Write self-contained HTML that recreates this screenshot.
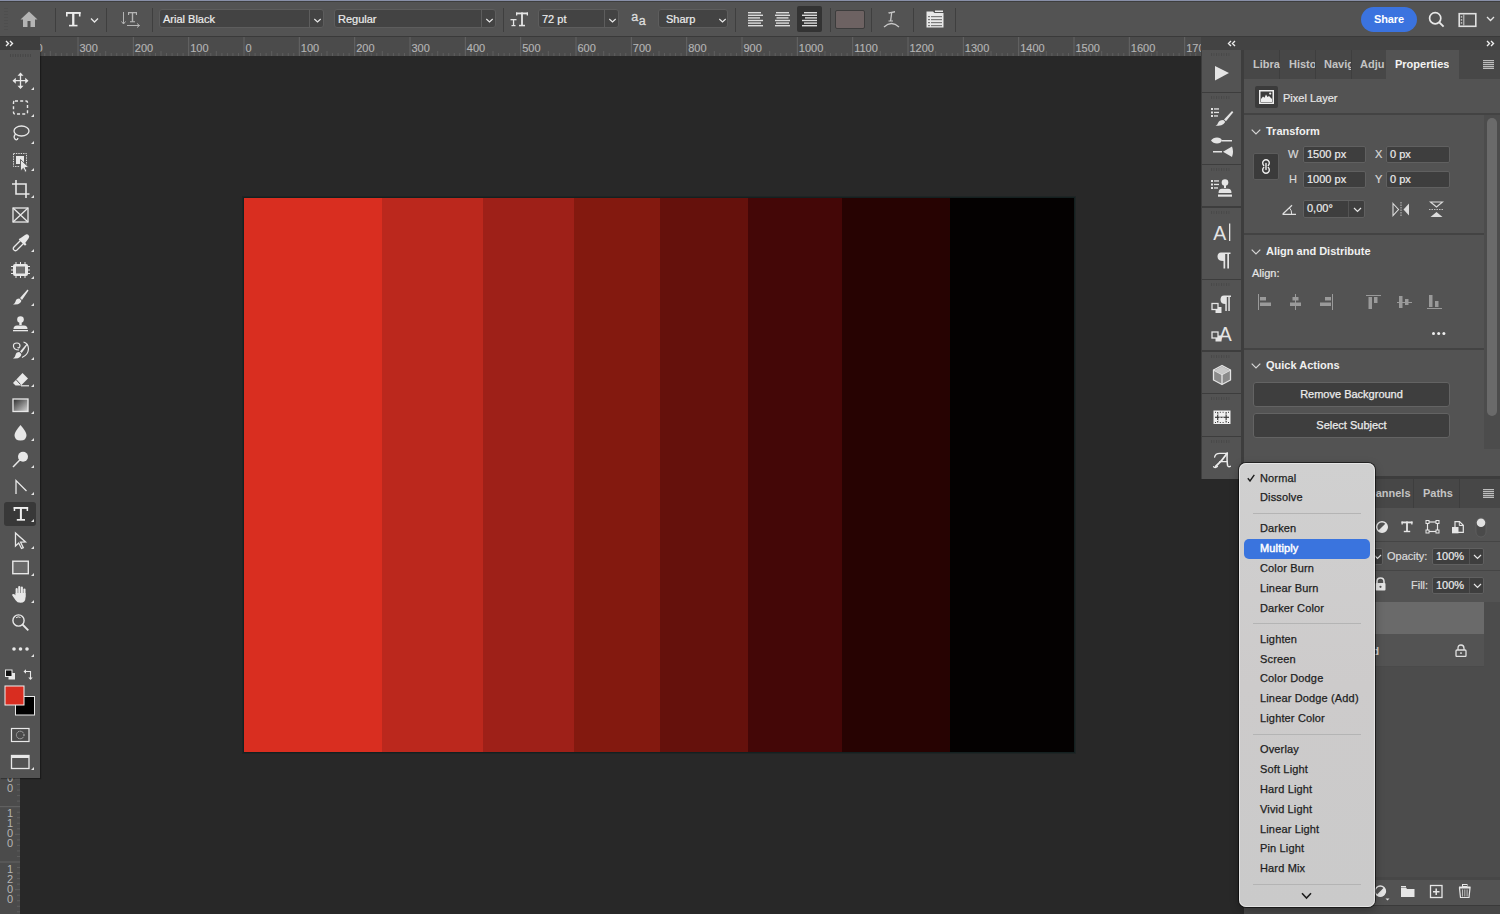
<!DOCTYPE html>
<html><head><meta charset="utf-8">
<style>
*{box-sizing:border-box;margin:0;padding:0}
html,body{width:1500px;height:914px;overflow:hidden;background:#282828;font-family:"Liberation Sans",sans-serif;color:#ddd;position:relative}
.abs{position:absolute}
.rl{position:absolute;top:6px;font-size:11px;line-height:11px;color:#b4b4b4;-webkit-text-stroke:0.15px #b4b4b4;white-space:nowrap}
.vl{position:absolute;left:6px;font-size:11px;line-height:10px;color:#b4b4b4;text-align:center;width:8px}
svg{display:block}
.sep{top:8px;width:1px;height:24px;background:#3f3f3f}
.box{background:#434343;border:1px solid #5d5d5d;border-radius:3px;overflow:hidden}
.bt{position:absolute;left:3px;top:1px;font-size:11px;line-height:17px;-webkit-text-stroke:0.2px #ececec;color:#ececec;white-space:nowrap}
.split{top:0;width:1px;height:17px;background:#5d5d5d}
.grp{left:1202px;width:39px;background:#535353}
.tsep{top:0;width:1px;height:29px;background:#3e3e3e}
.tab{top:8px;font-size:11px;line-height:13px;font-weight:bold;color:#c4c4c4;white-space:nowrap;overflow:hidden}
.lbl{font-size:11px;line-height:13px;color:#e6e6e6;-webkit-text-stroke:0.2px #e6e6e6;white-space:nowrap}
.lbl2{font-size:11px;line-height:13px;color:#d8d8d8;-webkit-text-stroke:0.2px #d8d8d8;white-space:nowrap}
.hd{left:22px;font-size:11px;line-height:13px;font-weight:bold;color:#f0f0f0;white-space:nowrap}
.chev{left:7px}
.inp{background:#3e3e3e;border:1px solid #606060;border-radius:2px;font-size:11px;line-height:15px;padding-left:3px;color:#ececec;-webkit-text-stroke:0.2px #ececec;white-space:nowrap}
.btn{background:#3e3e3e;border:1px solid #636363;border-radius:3px;font-size:11px;line-height:23px;text-align:center;color:#ececec;-webkit-text-stroke:0.25px #ececec;white-space:nowrap}
.inp2{background:#3e3e3e;border:1px solid #606060;border-radius:2px;font-size:11px;line-height:15px;color:#ececec;-webkit-text-stroke:0.2px #ececec;white-space:nowrap}
.inp2 span{position:absolute;left:3px;top:0}
.mi{left:21px;font-size:11px;line-height:13px;white-space:nowrap;letter-spacing:0.15px;-webkit-text-stroke:0.25px currentColor}

</style></head><body>
<div class="abs" id="hruler" style="left:0;top:37px;width:1201px;height:19px;background:#4b4b4b;overflow:hidden">
<svg width="1201" height="19" style="position:absolute;left:0;top:0"><rect x="-33.17" y="0" width="1" height="19" fill="#656565"/><rect x="-27.63" y="16" width="1" height="3" fill="#5e5e5e"/><rect x="-22.10" y="16" width="1" height="3" fill="#5e5e5e"/><rect x="-16.57" y="16" width="1" height="3" fill="#5e5e5e"/><rect x="-11.03" y="16" width="1" height="3" fill="#5e5e5e"/><rect x="-5.50" y="14" width="1" height="5" fill="#5e5e5e"/><rect x="0.03" y="16" width="1" height="3" fill="#5e5e5e"/><rect x="5.57" y="16" width="1" height="3" fill="#5e5e5e"/><rect x="11.10" y="16" width="1" height="3" fill="#5e5e5e"/><rect x="16.63" y="16" width="1" height="3" fill="#5e5e5e"/><rect x="22.17" y="0" width="1" height="19" fill="#656565"/><rect x="27.70" y="16" width="1" height="3" fill="#5e5e5e"/><rect x="33.23" y="16" width="1" height="3" fill="#5e5e5e"/><rect x="38.77" y="16" width="1" height="3" fill="#5e5e5e"/><rect x="44.30" y="16" width="1" height="3" fill="#5e5e5e"/><rect x="49.83" y="14" width="1" height="5" fill="#5e5e5e"/><rect x="55.37" y="16" width="1" height="3" fill="#5e5e5e"/><rect x="60.90" y="16" width="1" height="3" fill="#5e5e5e"/><rect x="66.43" y="16" width="1" height="3" fill="#5e5e5e"/><rect x="71.97" y="16" width="1" height="3" fill="#5e5e5e"/><rect x="77.50" y="0" width="1" height="19" fill="#656565"/><rect x="83.03" y="16" width="1" height="3" fill="#5e5e5e"/><rect x="88.57" y="16" width="1" height="3" fill="#5e5e5e"/><rect x="94.10" y="16" width="1" height="3" fill="#5e5e5e"/><rect x="99.63" y="16" width="1" height="3" fill="#5e5e5e"/><rect x="105.17" y="14" width="1" height="5" fill="#5e5e5e"/><rect x="110.70" y="16" width="1" height="3" fill="#5e5e5e"/><rect x="116.23" y="16" width="1" height="3" fill="#5e5e5e"/><rect x="121.77" y="16" width="1" height="3" fill="#5e5e5e"/><rect x="127.30" y="16" width="1" height="3" fill="#5e5e5e"/><rect x="132.83" y="0" width="1" height="19" fill="#656565"/><rect x="138.37" y="16" width="1" height="3" fill="#5e5e5e"/><rect x="143.90" y="16" width="1" height="3" fill="#5e5e5e"/><rect x="149.43" y="16" width="1" height="3" fill="#5e5e5e"/><rect x="154.97" y="16" width="1" height="3" fill="#5e5e5e"/><rect x="160.50" y="14" width="1" height="5" fill="#5e5e5e"/><rect x="166.03" y="16" width="1" height="3" fill="#5e5e5e"/><rect x="171.57" y="16" width="1" height="3" fill="#5e5e5e"/><rect x="177.10" y="16" width="1" height="3" fill="#5e5e5e"/><rect x="182.63" y="16" width="1" height="3" fill="#5e5e5e"/><rect x="188.17" y="0" width="1" height="19" fill="#656565"/><rect x="193.70" y="16" width="1" height="3" fill="#5e5e5e"/><rect x="199.23" y="16" width="1" height="3" fill="#5e5e5e"/><rect x="204.77" y="16" width="1" height="3" fill="#5e5e5e"/><rect x="210.30" y="16" width="1" height="3" fill="#5e5e5e"/><rect x="215.83" y="14" width="1" height="5" fill="#5e5e5e"/><rect x="221.37" y="16" width="1" height="3" fill="#5e5e5e"/><rect x="226.90" y="16" width="1" height="3" fill="#5e5e5e"/><rect x="232.43" y="16" width="1" height="3" fill="#5e5e5e"/><rect x="237.97" y="16" width="1" height="3" fill="#5e5e5e"/><rect x="243.50" y="0" width="1" height="19" fill="#656565"/><rect x="249.03" y="16" width="1" height="3" fill="#5e5e5e"/><rect x="254.57" y="16" width="1" height="3" fill="#5e5e5e"/><rect x="260.10" y="16" width="1" height="3" fill="#5e5e5e"/><rect x="265.63" y="16" width="1" height="3" fill="#5e5e5e"/><rect x="271.17" y="14" width="1" height="5" fill="#5e5e5e"/><rect x="276.70" y="16" width="1" height="3" fill="#5e5e5e"/><rect x="282.23" y="16" width="1" height="3" fill="#5e5e5e"/><rect x="287.77" y="16" width="1" height="3" fill="#5e5e5e"/><rect x="293.30" y="16" width="1" height="3" fill="#5e5e5e"/><rect x="298.83" y="0" width="1" height="19" fill="#656565"/><rect x="304.37" y="16" width="1" height="3" fill="#5e5e5e"/><rect x="309.90" y="16" width="1" height="3" fill="#5e5e5e"/><rect x="315.43" y="16" width="1" height="3" fill="#5e5e5e"/><rect x="320.97" y="16" width="1" height="3" fill="#5e5e5e"/><rect x="326.50" y="14" width="1" height="5" fill="#5e5e5e"/><rect x="332.03" y="16" width="1" height="3" fill="#5e5e5e"/><rect x="337.57" y="16" width="1" height="3" fill="#5e5e5e"/><rect x="343.10" y="16" width="1" height="3" fill="#5e5e5e"/><rect x="348.63" y="16" width="1" height="3" fill="#5e5e5e"/><rect x="354.17" y="0" width="1" height="19" fill="#656565"/><rect x="359.70" y="16" width="1" height="3" fill="#5e5e5e"/><rect x="365.23" y="16" width="1" height="3" fill="#5e5e5e"/><rect x="370.77" y="16" width="1" height="3" fill="#5e5e5e"/><rect x="376.30" y="16" width="1" height="3" fill="#5e5e5e"/><rect x="381.83" y="14" width="1" height="5" fill="#5e5e5e"/><rect x="387.37" y="16" width="1" height="3" fill="#5e5e5e"/><rect x="392.90" y="16" width="1" height="3" fill="#5e5e5e"/><rect x="398.43" y="16" width="1" height="3" fill="#5e5e5e"/><rect x="403.97" y="16" width="1" height="3" fill="#5e5e5e"/><rect x="409.50" y="0" width="1" height="19" fill="#656565"/><rect x="415.03" y="16" width="1" height="3" fill="#5e5e5e"/><rect x="420.57" y="16" width="1" height="3" fill="#5e5e5e"/><rect x="426.10" y="16" width="1" height="3" fill="#5e5e5e"/><rect x="431.63" y="16" width="1" height="3" fill="#5e5e5e"/><rect x="437.17" y="14" width="1" height="5" fill="#5e5e5e"/><rect x="442.70" y="16" width="1" height="3" fill="#5e5e5e"/><rect x="448.23" y="16" width="1" height="3" fill="#5e5e5e"/><rect x="453.77" y="16" width="1" height="3" fill="#5e5e5e"/><rect x="459.30" y="16" width="1" height="3" fill="#5e5e5e"/><rect x="464.83" y="0" width="1" height="19" fill="#656565"/><rect x="470.37" y="16" width="1" height="3" fill="#5e5e5e"/><rect x="475.90" y="16" width="1" height="3" fill="#5e5e5e"/><rect x="481.43" y="16" width="1" height="3" fill="#5e5e5e"/><rect x="486.97" y="16" width="1" height="3" fill="#5e5e5e"/><rect x="492.50" y="14" width="1" height="5" fill="#5e5e5e"/><rect x="498.03" y="16" width="1" height="3" fill="#5e5e5e"/><rect x="503.57" y="16" width="1" height="3" fill="#5e5e5e"/><rect x="509.10" y="16" width="1" height="3" fill="#5e5e5e"/><rect x="514.63" y="16" width="1" height="3" fill="#5e5e5e"/><rect x="520.17" y="0" width="1" height="19" fill="#656565"/><rect x="525.70" y="16" width="1" height="3" fill="#5e5e5e"/><rect x="531.23" y="16" width="1" height="3" fill="#5e5e5e"/><rect x="536.77" y="16" width="1" height="3" fill="#5e5e5e"/><rect x="542.30" y="16" width="1" height="3" fill="#5e5e5e"/><rect x="547.83" y="14" width="1" height="5" fill="#5e5e5e"/><rect x="553.37" y="16" width="1" height="3" fill="#5e5e5e"/><rect x="558.90" y="16" width="1" height="3" fill="#5e5e5e"/><rect x="564.43" y="16" width="1" height="3" fill="#5e5e5e"/><rect x="569.97" y="16" width="1" height="3" fill="#5e5e5e"/><rect x="575.50" y="0" width="1" height="19" fill="#656565"/><rect x="581.03" y="16" width="1" height="3" fill="#5e5e5e"/><rect x="586.57" y="16" width="1" height="3" fill="#5e5e5e"/><rect x="592.10" y="16" width="1" height="3" fill="#5e5e5e"/><rect x="597.63" y="16" width="1" height="3" fill="#5e5e5e"/><rect x="603.17" y="14" width="1" height="5" fill="#5e5e5e"/><rect x="608.70" y="16" width="1" height="3" fill="#5e5e5e"/><rect x="614.23" y="16" width="1" height="3" fill="#5e5e5e"/><rect x="619.77" y="16" width="1" height="3" fill="#5e5e5e"/><rect x="625.30" y="16" width="1" height="3" fill="#5e5e5e"/><rect x="630.83" y="0" width="1" height="19" fill="#656565"/><rect x="636.37" y="16" width="1" height="3" fill="#5e5e5e"/><rect x="641.90" y="16" width="1" height="3" fill="#5e5e5e"/><rect x="647.43" y="16" width="1" height="3" fill="#5e5e5e"/><rect x="652.97" y="16" width="1" height="3" fill="#5e5e5e"/><rect x="658.50" y="14" width="1" height="5" fill="#5e5e5e"/><rect x="664.03" y="16" width="1" height="3" fill="#5e5e5e"/><rect x="669.57" y="16" width="1" height="3" fill="#5e5e5e"/><rect x="675.10" y="16" width="1" height="3" fill="#5e5e5e"/><rect x="680.63" y="16" width="1" height="3" fill="#5e5e5e"/><rect x="686.17" y="0" width="1" height="19" fill="#656565"/><rect x="691.70" y="16" width="1" height="3" fill="#5e5e5e"/><rect x="697.23" y="16" width="1" height="3" fill="#5e5e5e"/><rect x="702.77" y="16" width="1" height="3" fill="#5e5e5e"/><rect x="708.30" y="16" width="1" height="3" fill="#5e5e5e"/><rect x="713.83" y="14" width="1" height="5" fill="#5e5e5e"/><rect x="719.37" y="16" width="1" height="3" fill="#5e5e5e"/><rect x="724.90" y="16" width="1" height="3" fill="#5e5e5e"/><rect x="730.43" y="16" width="1" height="3" fill="#5e5e5e"/><rect x="735.97" y="16" width="1" height="3" fill="#5e5e5e"/><rect x="741.50" y="0" width="1" height="19" fill="#656565"/><rect x="747.03" y="16" width="1" height="3" fill="#5e5e5e"/><rect x="752.57" y="16" width="1" height="3" fill="#5e5e5e"/><rect x="758.10" y="16" width="1" height="3" fill="#5e5e5e"/><rect x="763.63" y="16" width="1" height="3" fill="#5e5e5e"/><rect x="769.17" y="14" width="1" height="5" fill="#5e5e5e"/><rect x="774.70" y="16" width="1" height="3" fill="#5e5e5e"/><rect x="780.23" y="16" width="1" height="3" fill="#5e5e5e"/><rect x="785.77" y="16" width="1" height="3" fill="#5e5e5e"/><rect x="791.30" y="16" width="1" height="3" fill="#5e5e5e"/><rect x="796.83" y="0" width="1" height="19" fill="#656565"/><rect x="802.37" y="16" width="1" height="3" fill="#5e5e5e"/><rect x="807.90" y="16" width="1" height="3" fill="#5e5e5e"/><rect x="813.43" y="16" width="1" height="3" fill="#5e5e5e"/><rect x="818.97" y="16" width="1" height="3" fill="#5e5e5e"/><rect x="824.50" y="14" width="1" height="5" fill="#5e5e5e"/><rect x="830.03" y="16" width="1" height="3" fill="#5e5e5e"/><rect x="835.57" y="16" width="1" height="3" fill="#5e5e5e"/><rect x="841.10" y="16" width="1" height="3" fill="#5e5e5e"/><rect x="846.63" y="16" width="1" height="3" fill="#5e5e5e"/><rect x="852.17" y="0" width="1" height="19" fill="#656565"/><rect x="857.70" y="16" width="1" height="3" fill="#5e5e5e"/><rect x="863.23" y="16" width="1" height="3" fill="#5e5e5e"/><rect x="868.77" y="16" width="1" height="3" fill="#5e5e5e"/><rect x="874.30" y="16" width="1" height="3" fill="#5e5e5e"/><rect x="879.83" y="14" width="1" height="5" fill="#5e5e5e"/><rect x="885.37" y="16" width="1" height="3" fill="#5e5e5e"/><rect x="890.90" y="16" width="1" height="3" fill="#5e5e5e"/><rect x="896.43" y="16" width="1" height="3" fill="#5e5e5e"/><rect x="901.97" y="16" width="1" height="3" fill="#5e5e5e"/><rect x="907.50" y="0" width="1" height="19" fill="#656565"/><rect x="913.03" y="16" width="1" height="3" fill="#5e5e5e"/><rect x="918.57" y="16" width="1" height="3" fill="#5e5e5e"/><rect x="924.10" y="16" width="1" height="3" fill="#5e5e5e"/><rect x="929.63" y="16" width="1" height="3" fill="#5e5e5e"/><rect x="935.17" y="14" width="1" height="5" fill="#5e5e5e"/><rect x="940.70" y="16" width="1" height="3" fill="#5e5e5e"/><rect x="946.23" y="16" width="1" height="3" fill="#5e5e5e"/><rect x="951.77" y="16" width="1" height="3" fill="#5e5e5e"/><rect x="957.30" y="16" width="1" height="3" fill="#5e5e5e"/><rect x="962.83" y="0" width="1" height="19" fill="#656565"/><rect x="968.37" y="16" width="1" height="3" fill="#5e5e5e"/><rect x="973.90" y="16" width="1" height="3" fill="#5e5e5e"/><rect x="979.43" y="16" width="1" height="3" fill="#5e5e5e"/><rect x="984.97" y="16" width="1" height="3" fill="#5e5e5e"/><rect x="990.50" y="14" width="1" height="5" fill="#5e5e5e"/><rect x="996.03" y="16" width="1" height="3" fill="#5e5e5e"/><rect x="1001.57" y="16" width="1" height="3" fill="#5e5e5e"/><rect x="1007.10" y="16" width="1" height="3" fill="#5e5e5e"/><rect x="1012.63" y="16" width="1" height="3" fill="#5e5e5e"/><rect x="1018.17" y="0" width="1" height="19" fill="#656565"/><rect x="1023.70" y="16" width="1" height="3" fill="#5e5e5e"/><rect x="1029.23" y="16" width="1" height="3" fill="#5e5e5e"/><rect x="1034.77" y="16" width="1" height="3" fill="#5e5e5e"/><rect x="1040.30" y="16" width="1" height="3" fill="#5e5e5e"/><rect x="1045.83" y="14" width="1" height="5" fill="#5e5e5e"/><rect x="1051.37" y="16" width="1" height="3" fill="#5e5e5e"/><rect x="1056.90" y="16" width="1" height="3" fill="#5e5e5e"/><rect x="1062.43" y="16" width="1" height="3" fill="#5e5e5e"/><rect x="1067.97" y="16" width="1" height="3" fill="#5e5e5e"/><rect x="1073.50" y="0" width="1" height="19" fill="#656565"/><rect x="1079.03" y="16" width="1" height="3" fill="#5e5e5e"/><rect x="1084.57" y="16" width="1" height="3" fill="#5e5e5e"/><rect x="1090.10" y="16" width="1" height="3" fill="#5e5e5e"/><rect x="1095.63" y="16" width="1" height="3" fill="#5e5e5e"/><rect x="1101.17" y="14" width="1" height="5" fill="#5e5e5e"/><rect x="1106.70" y="16" width="1" height="3" fill="#5e5e5e"/><rect x="1112.23" y="16" width="1" height="3" fill="#5e5e5e"/><rect x="1117.77" y="16" width="1" height="3" fill="#5e5e5e"/><rect x="1123.30" y="16" width="1" height="3" fill="#5e5e5e"/><rect x="1128.83" y="0" width="1" height="19" fill="#656565"/><rect x="1134.37" y="16" width="1" height="3" fill="#5e5e5e"/><rect x="1139.90" y="16" width="1" height="3" fill="#5e5e5e"/><rect x="1145.43" y="16" width="1" height="3" fill="#5e5e5e"/><rect x="1150.97" y="16" width="1" height="3" fill="#5e5e5e"/><rect x="1156.50" y="14" width="1" height="5" fill="#5e5e5e"/><rect x="1162.03" y="16" width="1" height="3" fill="#5e5e5e"/><rect x="1167.57" y="16" width="1" height="3" fill="#5e5e5e"/><rect x="1173.10" y="16" width="1" height="3" fill="#5e5e5e"/><rect x="1178.63" y="16" width="1" height="3" fill="#5e5e5e"/><rect x="1184.17" y="0" width="1" height="19" fill="#656565"/><rect x="1189.70" y="16" width="1" height="3" fill="#5e5e5e"/><rect x="1195.23" y="16" width="1" height="3" fill="#5e5e5e"/><rect x="1200.77" y="16" width="1" height="3" fill="#5e5e5e"/><rect x="1206.30" y="16" width="1" height="3" fill="#5e5e5e"/><rect x="1211.83" y="14" width="1" height="5" fill="#5e5e5e"/><rect x="1217.37" y="16" width="1" height="3" fill="#5e5e5e"/><rect x="1222.90" y="16" width="1" height="3" fill="#5e5e5e"/><rect x="1228.43" y="16" width="1" height="3" fill="#5e5e5e"/><rect x="1233.97" y="16" width="1" height="3" fill="#5e5e5e"/></svg>
<span class="rl" style="left:-31.17px">500</span>
<span class="rl" style="left:24.17px">400</span>
<span class="rl" style="left:79.50px">300</span>
<span class="rl" style="left:134.83px">200</span>
<span class="rl" style="left:190.17px">100</span>
<span class="rl" style="left:245.50px">0</span>
<span class="rl" style="left:300.83px">100</span>
<span class="rl" style="left:356.17px">200</span>
<span class="rl" style="left:411.50px">300</span>
<span class="rl" style="left:466.83px">400</span>
<span class="rl" style="left:522.17px">500</span>
<span class="rl" style="left:577.50px">600</span>
<span class="rl" style="left:632.83px">700</span>
<span class="rl" style="left:688.17px">800</span>
<span class="rl" style="left:743.50px">900</span>
<span class="rl" style="left:798.83px">1000</span>
<span class="rl" style="left:854.17px">1100</span>
<span class="rl" style="left:909.50px">1200</span>
<span class="rl" style="left:964.83px">1300</span>
<span class="rl" style="left:1020.17px">1400</span>
<span class="rl" style="left:1075.50px">1500</span>
<span class="rl" style="left:1130.83px">1600</span>
<span class="rl" style="left:1186.17px">1700</span>
</div>
<div class="abs" id="vruler" style="left:0;top:56px;width:20px;height:858px;background:#4b4b4b;overflow:hidden">
<svg width="20" height="858" style="position:absolute;left:0;top:0"><rect x="0" y="-24.50" width="20" height="1" fill="#656565"/><rect x="17" y="-18.97" width="3" height="1" fill="#5e5e5e"/><rect x="17" y="-13.43" width="3" height="1" fill="#5e5e5e"/><rect x="17" y="-7.90" width="3" height="1" fill="#5e5e5e"/><rect x="17" y="-2.37" width="3" height="1" fill="#5e5e5e"/><rect x="15" y="3.17" width="5" height="1" fill="#5e5e5e"/><rect x="17" y="8.70" width="3" height="1" fill="#5e5e5e"/><rect x="17" y="14.23" width="3" height="1" fill="#5e5e5e"/><rect x="17" y="19.77" width="3" height="1" fill="#5e5e5e"/><rect x="17" y="25.30" width="3" height="1" fill="#5e5e5e"/><rect x="0" y="30.83" width="20" height="1" fill="#656565"/><rect x="17" y="36.37" width="3" height="1" fill="#5e5e5e"/><rect x="17" y="41.90" width="3" height="1" fill="#5e5e5e"/><rect x="17" y="47.43" width="3" height="1" fill="#5e5e5e"/><rect x="17" y="52.97" width="3" height="1" fill="#5e5e5e"/><rect x="15" y="58.50" width="5" height="1" fill="#5e5e5e"/><rect x="17" y="64.03" width="3" height="1" fill="#5e5e5e"/><rect x="17" y="69.57" width="3" height="1" fill="#5e5e5e"/><rect x="17" y="75.10" width="3" height="1" fill="#5e5e5e"/><rect x="17" y="80.63" width="3" height="1" fill="#5e5e5e"/><rect x="0" y="86.17" width="20" height="1" fill="#656565"/><rect x="17" y="91.70" width="3" height="1" fill="#5e5e5e"/><rect x="17" y="97.23" width="3" height="1" fill="#5e5e5e"/><rect x="17" y="102.77" width="3" height="1" fill="#5e5e5e"/><rect x="17" y="108.30" width="3" height="1" fill="#5e5e5e"/><rect x="15" y="113.83" width="5" height="1" fill="#5e5e5e"/><rect x="17" y="119.37" width="3" height="1" fill="#5e5e5e"/><rect x="17" y="124.90" width="3" height="1" fill="#5e5e5e"/><rect x="17" y="130.43" width="3" height="1" fill="#5e5e5e"/><rect x="17" y="135.97" width="3" height="1" fill="#5e5e5e"/><rect x="0" y="141.50" width="20" height="1" fill="#656565"/><rect x="17" y="147.03" width="3" height="1" fill="#5e5e5e"/><rect x="17" y="152.57" width="3" height="1" fill="#5e5e5e"/><rect x="17" y="158.10" width="3" height="1" fill="#5e5e5e"/><rect x="17" y="163.63" width="3" height="1" fill="#5e5e5e"/><rect x="15" y="169.17" width="5" height="1" fill="#5e5e5e"/><rect x="17" y="174.70" width="3" height="1" fill="#5e5e5e"/><rect x="17" y="180.23" width="3" height="1" fill="#5e5e5e"/><rect x="17" y="185.77" width="3" height="1" fill="#5e5e5e"/><rect x="17" y="191.30" width="3" height="1" fill="#5e5e5e"/><rect x="0" y="196.83" width="20" height="1" fill="#656565"/><rect x="17" y="202.37" width="3" height="1" fill="#5e5e5e"/><rect x="17" y="207.90" width="3" height="1" fill="#5e5e5e"/><rect x="17" y="213.43" width="3" height="1" fill="#5e5e5e"/><rect x="17" y="218.97" width="3" height="1" fill="#5e5e5e"/><rect x="15" y="224.50" width="5" height="1" fill="#5e5e5e"/><rect x="17" y="230.03" width="3" height="1" fill="#5e5e5e"/><rect x="17" y="235.57" width="3" height="1" fill="#5e5e5e"/><rect x="17" y="241.10" width="3" height="1" fill="#5e5e5e"/><rect x="17" y="246.63" width="3" height="1" fill="#5e5e5e"/><rect x="0" y="252.17" width="20" height="1" fill="#656565"/><rect x="17" y="257.70" width="3" height="1" fill="#5e5e5e"/><rect x="17" y="263.23" width="3" height="1" fill="#5e5e5e"/><rect x="17" y="268.77" width="3" height="1" fill="#5e5e5e"/><rect x="17" y="274.30" width="3" height="1" fill="#5e5e5e"/><rect x="15" y="279.83" width="5" height="1" fill="#5e5e5e"/><rect x="17" y="285.37" width="3" height="1" fill="#5e5e5e"/><rect x="17" y="290.90" width="3" height="1" fill="#5e5e5e"/><rect x="17" y="296.43" width="3" height="1" fill="#5e5e5e"/><rect x="17" y="301.97" width="3" height="1" fill="#5e5e5e"/><rect x="0" y="307.50" width="20" height="1" fill="#656565"/><rect x="17" y="313.03" width="3" height="1" fill="#5e5e5e"/><rect x="17" y="318.57" width="3" height="1" fill="#5e5e5e"/><rect x="17" y="324.10" width="3" height="1" fill="#5e5e5e"/><rect x="17" y="329.63" width="3" height="1" fill="#5e5e5e"/><rect x="15" y="335.17" width="5" height="1" fill="#5e5e5e"/><rect x="17" y="340.70" width="3" height="1" fill="#5e5e5e"/><rect x="17" y="346.23" width="3" height="1" fill="#5e5e5e"/><rect x="17" y="351.77" width="3" height="1" fill="#5e5e5e"/><rect x="17" y="357.30" width="3" height="1" fill="#5e5e5e"/><rect x="0" y="362.83" width="20" height="1" fill="#656565"/><rect x="17" y="368.37" width="3" height="1" fill="#5e5e5e"/><rect x="17" y="373.90" width="3" height="1" fill="#5e5e5e"/><rect x="17" y="379.43" width="3" height="1" fill="#5e5e5e"/><rect x="17" y="384.97" width="3" height="1" fill="#5e5e5e"/><rect x="15" y="390.50" width="5" height="1" fill="#5e5e5e"/><rect x="17" y="396.03" width="3" height="1" fill="#5e5e5e"/><rect x="17" y="401.57" width="3" height="1" fill="#5e5e5e"/><rect x="17" y="407.10" width="3" height="1" fill="#5e5e5e"/><rect x="17" y="412.63" width="3" height="1" fill="#5e5e5e"/><rect x="0" y="418.17" width="20" height="1" fill="#656565"/><rect x="17" y="423.70" width="3" height="1" fill="#5e5e5e"/><rect x="17" y="429.23" width="3" height="1" fill="#5e5e5e"/><rect x="17" y="434.77" width="3" height="1" fill="#5e5e5e"/><rect x="17" y="440.30" width="3" height="1" fill="#5e5e5e"/><rect x="15" y="445.83" width="5" height="1" fill="#5e5e5e"/><rect x="17" y="451.37" width="3" height="1" fill="#5e5e5e"/><rect x="17" y="456.90" width="3" height="1" fill="#5e5e5e"/><rect x="17" y="462.43" width="3" height="1" fill="#5e5e5e"/><rect x="17" y="467.97" width="3" height="1" fill="#5e5e5e"/><rect x="0" y="473.50" width="20" height="1" fill="#656565"/><rect x="17" y="479.03" width="3" height="1" fill="#5e5e5e"/><rect x="17" y="484.57" width="3" height="1" fill="#5e5e5e"/><rect x="17" y="490.10" width="3" height="1" fill="#5e5e5e"/><rect x="17" y="495.63" width="3" height="1" fill="#5e5e5e"/><rect x="15" y="501.17" width="5" height="1" fill="#5e5e5e"/><rect x="17" y="506.70" width="3" height="1" fill="#5e5e5e"/><rect x="17" y="512.23" width="3" height="1" fill="#5e5e5e"/><rect x="17" y="517.77" width="3" height="1" fill="#5e5e5e"/><rect x="17" y="523.30" width="3" height="1" fill="#5e5e5e"/><rect x="0" y="528.83" width="20" height="1" fill="#656565"/><rect x="17" y="534.37" width="3" height="1" fill="#5e5e5e"/><rect x="17" y="539.90" width="3" height="1" fill="#5e5e5e"/><rect x="17" y="545.43" width="3" height="1" fill="#5e5e5e"/><rect x="17" y="550.97" width="3" height="1" fill="#5e5e5e"/><rect x="15" y="556.50" width="5" height="1" fill="#5e5e5e"/><rect x="17" y="562.03" width="3" height="1" fill="#5e5e5e"/><rect x="17" y="567.57" width="3" height="1" fill="#5e5e5e"/><rect x="17" y="573.10" width="3" height="1" fill="#5e5e5e"/><rect x="17" y="578.63" width="3" height="1" fill="#5e5e5e"/><rect x="0" y="584.17" width="20" height="1" fill="#656565"/><rect x="17" y="589.70" width="3" height="1" fill="#5e5e5e"/><rect x="17" y="595.23" width="3" height="1" fill="#5e5e5e"/><rect x="17" y="600.77" width="3" height="1" fill="#5e5e5e"/><rect x="17" y="606.30" width="3" height="1" fill="#5e5e5e"/><rect x="15" y="611.83" width="5" height="1" fill="#5e5e5e"/><rect x="17" y="617.37" width="3" height="1" fill="#5e5e5e"/><rect x="17" y="622.90" width="3" height="1" fill="#5e5e5e"/><rect x="17" y="628.43" width="3" height="1" fill="#5e5e5e"/><rect x="17" y="633.97" width="3" height="1" fill="#5e5e5e"/><rect x="0" y="639.50" width="20" height="1" fill="#656565"/><rect x="17" y="645.03" width="3" height="1" fill="#5e5e5e"/><rect x="17" y="650.57" width="3" height="1" fill="#5e5e5e"/><rect x="17" y="656.10" width="3" height="1" fill="#5e5e5e"/><rect x="17" y="661.63" width="3" height="1" fill="#5e5e5e"/><rect x="15" y="667.17" width="5" height="1" fill="#5e5e5e"/><rect x="17" y="672.70" width="3" height="1" fill="#5e5e5e"/><rect x="17" y="678.23" width="3" height="1" fill="#5e5e5e"/><rect x="17" y="683.77" width="3" height="1" fill="#5e5e5e"/><rect x="17" y="689.30" width="3" height="1" fill="#5e5e5e"/><rect x="0" y="694.83" width="20" height="1" fill="#656565"/><rect x="17" y="700.37" width="3" height="1" fill="#5e5e5e"/><rect x="17" y="705.90" width="3" height="1" fill="#5e5e5e"/><rect x="17" y="711.43" width="3" height="1" fill="#5e5e5e"/><rect x="17" y="716.97" width="3" height="1" fill="#5e5e5e"/><rect x="15" y="722.50" width="5" height="1" fill="#5e5e5e"/><rect x="17" y="728.03" width="3" height="1" fill="#5e5e5e"/><rect x="17" y="733.57" width="3" height="1" fill="#5e5e5e"/><rect x="17" y="739.10" width="3" height="1" fill="#5e5e5e"/><rect x="17" y="744.63" width="3" height="1" fill="#5e5e5e"/><rect x="0" y="750.17" width="20" height="1" fill="#656565"/><rect x="17" y="755.70" width="3" height="1" fill="#5e5e5e"/><rect x="17" y="761.23" width="3" height="1" fill="#5e5e5e"/><rect x="17" y="766.77" width="3" height="1" fill="#5e5e5e"/><rect x="17" y="772.30" width="3" height="1" fill="#5e5e5e"/><rect x="15" y="777.83" width="5" height="1" fill="#5e5e5e"/><rect x="17" y="783.37" width="3" height="1" fill="#5e5e5e"/><rect x="17" y="788.90" width="3" height="1" fill="#5e5e5e"/><rect x="17" y="794.43" width="3" height="1" fill="#5e5e5e"/><rect x="17" y="799.97" width="3" height="1" fill="#5e5e5e"/><rect x="0" y="805.50" width="20" height="1" fill="#656565"/><rect x="17" y="811.03" width="3" height="1" fill="#5e5e5e"/><rect x="17" y="816.57" width="3" height="1" fill="#5e5e5e"/><rect x="17" y="822.10" width="3" height="1" fill="#5e5e5e"/><rect x="17" y="827.63" width="3" height="1" fill="#5e5e5e"/><rect x="15" y="833.17" width="5" height="1" fill="#5e5e5e"/><rect x="17" y="838.70" width="3" height="1" fill="#5e5e5e"/><rect x="17" y="844.23" width="3" height="1" fill="#5e5e5e"/><rect x="17" y="849.77" width="3" height="1" fill="#5e5e5e"/><rect x="17" y="855.30" width="3" height="1" fill="#5e5e5e"/><rect x="0" y="860.83" width="20" height="1" fill="#656565"/><rect x="17" y="866.37" width="3" height="1" fill="#5e5e5e"/><rect x="17" y="871.90" width="3" height="1" fill="#5e5e5e"/><rect x="17" y="877.43" width="3" height="1" fill="#5e5e5e"/><rect x="17" y="882.97" width="3" height="1" fill="#5e5e5e"/><rect x="15" y="888.50" width="5" height="1" fill="#5e5e5e"/><rect x="17" y="894.03" width="3" height="1" fill="#5e5e5e"/><rect x="17" y="899.57" width="3" height="1" fill="#5e5e5e"/><rect x="17" y="905.10" width="3" height="1" fill="#5e5e5e"/><rect x="17" y="910.63" width="3" height="1" fill="#5e5e5e"/><rect x="0" y="916.17" width="20" height="1" fill="#656565"/><rect x="17" y="921.70" width="3" height="1" fill="#5e5e5e"/><rect x="17" y="927.23" width="3" height="1" fill="#5e5e5e"/><rect x="17" y="932.77" width="3" height="1" fill="#5e5e5e"/><rect x="17" y="938.30" width="3" height="1" fill="#5e5e5e"/><rect x="15" y="943.83" width="5" height="1" fill="#5e5e5e"/><rect x="17" y="949.37" width="3" height="1" fill="#5e5e5e"/><rect x="17" y="954.90" width="3" height="1" fill="#5e5e5e"/><rect x="17" y="960.43" width="3" height="1" fill="#5e5e5e"/><rect x="17" y="965.97" width="3" height="1" fill="#5e5e5e"/><rect x="0" y="971.50" width="20" height="1" fill="#656565"/><rect x="17" y="977.03" width="3" height="1" fill="#5e5e5e"/><rect x="17" y="982.57" width="3" height="1" fill="#5e5e5e"/><rect x="17" y="988.10" width="3" height="1" fill="#5e5e5e"/><rect x="17" y="993.63" width="3" height="1" fill="#5e5e5e"/><rect x="15" y="999.17" width="5" height="1" fill="#5e5e5e"/><rect x="17" y="1004.70" width="3" height="1" fill="#5e5e5e"/><rect x="17" y="1010.23" width="3" height="1" fill="#5e5e5e"/><rect x="17" y="1015.77" width="3" height="1" fill="#5e5e5e"/><rect x="17" y="1021.30" width="3" height="1" fill="#5e5e5e"/></svg>
<span class="vl" style="top:-22.50px">3<br>0<br>0</span>
<span class="vl" style="top:32.83px">2<br>0<br>0</span>
<span class="vl" style="top:88.17px">1<br>0<br>0</span>
<span class="vl" style="top:143.50px">0</span>
<span class="vl" style="top:198.83px">1<br>0<br>0</span>
<span class="vl" style="top:254.17px">2<br>0<br>0</span>
<span class="vl" style="top:309.50px">3<br>0<br>0</span>
<span class="vl" style="top:364.83px">4<br>0<br>0</span>
<span class="vl" style="top:420.17px">5<br>0<br>0</span>
<span class="vl" style="top:475.50px">6<br>0<br>0</span>
<span class="vl" style="top:530.83px">7<br>0<br>0</span>
<span class="vl" style="top:586.17px">8<br>0<br>0</span>
<span class="vl" style="top:641.50px">9<br>0<br>0</span>
<span class="vl" style="top:696.83px">1<br>0<br>0<br>0</span>
<span class="vl" style="top:752.17px">1<br>1<br>0<br>0</span>
<span class="vl" style="top:807.50px">1<br>2<br>0<br>0</span>
<span class="vl" style="top:862.83px">1<br>3<br>0<br>0</span>
<span class="vl" style="top:918.17px">1<br>4<br>0<br>0</span>
<span class="vl" style="top:973.50px">1<br>5<br>0<br>0</span>
</div>
<div class="abs" id="topbar" style="left:0;top:0;width:1500px;height:37px;background:#535353">
 <div class="abs" style="left:0;top:0;width:1500px;height:1px;background:#888fa8"></div>
 <div class="abs" style="left:0;top:1px;width:1500px;height:1px;background:#3e3e3e"></div>
 <div class="abs" style="left:0;top:36px;width:1500px;height:1px;background:#3a3a3a"></div>
 <!-- grip -->
 <svg class="abs" style="left:4px;top:8px" width="4" height="24"><g fill="#4e4e4e"><rect x="0" y="0" width="4" height="1"/><rect x="0" y="3" width="4" height="1"/><rect x="0" y="6" width="4" height="1"/><rect x="0" y="9" width="4" height="1"/><rect x="0" y="12" width="4" height="1"/><rect x="0" y="15" width="4" height="1"/><rect x="0" y="18" width="4" height="1"/><rect x="0" y="21" width="4" height="1"/></g></svg>
 <!-- home -->
 <svg class="abs" style="left:19px;top:10px" width="20" height="18" viewBox="0 0 20 18"><path d="M10 1.5 L1.5 9.5 L4 9.5 L4 17 L8.5 17 L8.5 11 L11.5 11 L11.5 17 L16 17 L16 9.5 L18.5 9.5 Z" fill="#b4b4b4"/></svg>
 <div class="abs sep" style="left:55px"></div>
 <!-- T tool -->
 <svg class="abs" style="left:65px;top:11px" width="17" height="16" viewBox="0 0 17 16"><g fill="#ececec"><rect x="1" y="1" width="14.5" height="1.9"/><rect x="7.1" y="1" width="2.3" height="14"/><rect x="4" y="13.8" width="8.5" height="1.6"/><rect x="1" y="1" width="1.6" height="4.5"/><rect x="13.9" y="1" width="1.6" height="4.5"/></g></svg>
 <svg class="abs" style="left:90px;top:17px" width="9" height="7" viewBox="0 0 9 7"><path d="M1 1.5 L4.5 5 L8 1.5" stroke="#e6e6e6" stroke-width="1.3" fill="none"/></svg>
 <div class="abs sep" style="left:106px"></div>
 <!-- vertical type orientation -->
 <svg class="abs" style="left:121px;top:11px" width="20" height="17" viewBox="0 0 20 17"><g stroke="#b4b4b4" stroke-width="1" fill="none"><path d="M2.5 1 V13 M0.5 10.5 L2.5 13 L4.5 10.5"/><path d="M6 14.5 H18.5 M16 12.5 L18.5 14.5 L16 16.5"/></g><g fill="#b4b4b4"><rect x="7" y="1" width="9" height="1.3"/><rect x="10.8" y="1" width="1.4" height="10"/><rect x="9" y="10.2" width="5" height="1.1"/><rect x="7" y="1" width="1.1" height="3"/><rect x="14.9" y="1" width="1.1" height="3"/></g></svg>
 <div class="abs sep" style="left:152px"></div>
 <!-- font family box -->
 <div class="abs box" style="left:159px;top:9px;width:165px;height:19px"><span class="bt">Arial Black</span><div class="abs split" style="left:149px"></div><svg class="abs" style="left:153px;top:8px" width="9" height="6" viewBox="0 0 9 6"><path d="M1.3 1 L4.5 4 L7.7 1" stroke="#e6e6e6" stroke-width="1.2" fill="none"/></svg></div>
 <div class="abs box" style="left:334px;top:9px;width:162px;height:19px"><span class="bt">Regular</span><div class="abs split" style="left:146px"></div><svg class="abs" style="left:150px;top:8px" width="9" height="6" viewBox="0 0 9 6"><path d="M1.3 1 L4.5 4 L7.7 1" stroke="#e6e6e6" stroke-width="1.2" fill="none"/></svg></div>
 <div class="abs sep" style="left:503px"></div>
 <!-- font size icon -->
 <svg class="abs" style="left:510px;top:12px" width="19" height="15" viewBox="0 0 19 15"><g fill="#e6e6e6"><rect x="6" y="0.5" width="12" height="1.8"/><rect x="11.1" y="0.5" width="1.8" height="13.5"/><rect x="9" y="12.8" width="6" height="1.5"/><rect x="6" y="0.5" width="1.3" height="3"/><rect x="16.7" y="0.5" width="1.3" height="3"/><rect x="0.5" y="7" width="6" height="1.3"/><rect x="2.9" y="7" width="1.3" height="7"/><rect x="1.5" y="13" width="4" height="1.2"/></g></svg>
 <div class="abs box" style="left:538px;top:9px;width:81px;height:19px"><span class="bt">72 pt</span><div class="abs split" style="left:65px"></div><svg class="abs" style="left:69px;top:8px" width="9" height="6" viewBox="0 0 9 6"><path d="M1.3 1 L4.5 4 L7.7 1" stroke="#e6e6e6" stroke-width="1.2" fill="none"/></svg></div>
 <!-- aa icon -->
 <svg class="abs" style="left:628px;top:10px" width="22" height="18" viewBox="628 10 22 18"><text x="631.3" y="21" font-family="Liberation Sans" font-size="12.5" fill="#dedede" stroke="#dedede" stroke-width="0.3">a</text><text x="638.8" y="25" font-family="Liberation Sans" font-size="12.5" fill="#dedede" stroke="#dedede" stroke-width="0.3">a</text></svg>
 <div class="abs box" style="left:658px;top:9px;width:70px;height:19px"><span class="bt" style="left:7px">Sharp</span><svg class="abs" style="left:59px;top:8px" width="9" height="6" viewBox="0 0 9 6"><path d="M1.3 1 L4.5 4 L7.7 1" stroke="#e6e6e6" stroke-width="1.2" fill="none"/></svg></div>
 <div class="abs sep" style="left:735px"></div>
 <!-- align icons -->
 <svg class="abs" style="left:747px;top:11px" width="17" height="16" viewBox="0 0 17 16"><g fill="#dcdcdc"><rect x="1" y="1" width="13" height="1.4"/><rect x="1" y="3.6" width="15" height="1.4"/><rect x="1" y="6.2" width="12" height="1.4"/><rect x="1" y="8.8" width="15" height="1.4"/><rect x="1" y="11.4" width="13" height="1.4"/><rect x="1" y="14" width="15" height="1.4"/></g></svg>
 <svg class="abs" style="left:774px;top:11px" width="17" height="16" viewBox="0 0 17 16"><g fill="#dcdcdc"><rect x="2" y="1" width="13" height="1.4"/><rect x="1" y="3.6" width="15" height="1.4"/><rect x="2.5" y="6.2" width="12" height="1.4"/><rect x="1" y="8.8" width="15" height="1.4"/><rect x="2" y="11.4" width="13" height="1.4"/><rect x="1" y="14" width="15" height="1.4"/></g></svg>
 <div class="abs" style="left:797px;top:6px;width:25px;height:26px;background:#333;border-radius:2px"></div>
 <svg class="abs" style="left:801px;top:11px" width="17" height="16" viewBox="0 0 17 16"><g fill="#dcdcdc"><rect x="3" y="1" width="13" height="1.4"/><rect x="1" y="3.6" width="15" height="1.4"/><rect x="4" y="6.2" width="12" height="1.4"/><rect x="1" y="8.8" width="15" height="1.4"/><rect x="3" y="11.4" width="13" height="1.4"/><rect x="1" y="14" width="15" height="1.4"/></g></svg>
 <div class="abs sep" style="left:830px"></div>
 <div class="abs" style="left:835px;top:10px;width:30px;height:19px;background:#6d6262;border:1.5px solid #3c3c3c;border-radius:2px"></div>
 <div class="abs sep" style="left:871px"></div>
 <!-- warp text -->
 <svg class="abs" style="left:883px;top:10px" width="17" height="18" viewBox="0 0 17 18"><g fill="none" stroke="#c8c8c8" stroke-width="1.2"><path d="M1 17 Q8.5 10 16 17"/></g><g fill="#c8c8c8"><path d="M5 2.5 L12 1 L12 2.5 L9.3 3 L8.3 10.5 L10 10.5 L10 11.6 L5.5 11.6 L5.5 10.5 L7 10.5 L8 3.3 L6 3.7 Z"/></g></svg>
 <div class="abs sep" style="left:913px"></div>
 <!-- panels icon -->
 <svg class="abs" style="left:926px;top:10px" width="18" height="18" viewBox="0 0 18 18"><path d="M0.5 1.5 H7 L8.5 3 H17.5 V17.5 H0.5 Z" fill="#e8e8e8"/><g fill="#7a7a7a"><rect x="2" y="6" width="2" height="1.2"/><rect x="5" y="6" width="11" height="1.2"/><rect x="2" y="9" width="2" height="1.2"/><rect x="5" y="9" width="11" height="1.2"/><rect x="2" y="12" width="2" height="1.2"/><rect x="5" y="12" width="11" height="1.2"/><rect x="2" y="15" width="2" height="1.2"/><rect x="5" y="15" width="11" height="1.2"/></g><rect x="9" y="0.5" width="8" height="1.5" fill="#e8e8e8"/></svg>
 <div class="abs sep" style="left:955px"></div>
 <!-- share -->
 <div class="abs" style="left:1361px;top:7px;width:56px;height:25px;border-radius:12.5px;background:#3b73df;color:#fff;font-weight:bold;font-size:11px;line-height:25px;text-align:center;letter-spacing:-0.1px">Share</div>
 <svg class="abs" style="left:1428px;top:11px" width="17" height="17" viewBox="0 0 17 17"><circle cx="7.2" cy="7.2" r="5.6" stroke="#e8e8e8" stroke-width="1.7" fill="none"/><path d="M11.3 11.3 L15.6 15.6" stroke="#e8e8e8" stroke-width="1.9"/></svg>
 <svg class="abs" style="left:1458px;top:12px" width="19" height="16" viewBox="0 0 19 16"><rect x="1.2" y="1.7" width="16.6" height="12.6" stroke="#e0e0e0" stroke-width="1.6" fill="none"/><rect x="5.3" y="2.5" width="1" height="11" fill="#cfcfcf"/><g fill="#cfcfcf"><rect x="2.8" y="4.2" width="1.4" height="1.4"/><rect x="2.8" y="7.2" width="1.4" height="1.4"/><rect x="2.8" y="10.2" width="1.4" height="1.4"/></g></svg>
 <svg class="abs" style="left:1486px;top:16px" width="9" height="6" viewBox="0 0 9 6"><path d="M1 1 L4.5 4.5 L8 1" stroke="#e6e6e6" stroke-width="1.3" fill="none"/></svg>
</div>
<div class="abs" style="left:0;top:37px;width:40px;height:13px;background:#3e3e3e">
 <svg class="abs" style="left:5px;top:3px" width="9" height="7" viewBox="0 0 9 7"><path d="M1 1 L3.5 3.5 L1 6 M5 1 L7.5 3.5 L5 6" stroke="#eee" stroke-width="1.4" fill="none"/></svg>
</div>
<div class="abs" id="toolbar" style="left:0;top:50px;width:40px;height:728px;background:#535353;box-shadow:1px 1px 1px rgba(0,0,0,.3)">
 <svg class="abs" style="left:10px;top:4px" width="21" height="3"><g fill="#474747"><rect x="0" y="0" width="1" height="3"/><rect x="2.5" y="0" width="1" height="3"/><rect x="5" y="0" width="1" height="3"/><rect x="7.5" y="0" width="1" height="3"/><rect x="10" y="0" width="1" height="3"/><rect x="12.5" y="0" width="1" height="3"/><rect x="15" y="0" width="1" height="3"/><rect x="17.5" y="0" width="1" height="3"/><rect x="20" y="0" width="1" height="3"/></g></svg>
 <div class="abs" style="left:4px;top:452px;width:32px;height:24px;background:#383838;border-radius:3px"></div>
 <svg class="abs" style="left:0;top:0" width="40" height="727" viewBox="0 50 40 727">
  <g fill="#e4e4e4" stroke="none">
   <!-- corner triangles -->
   <path d="M34 87 V90 H31 Z"/><path d="M34 114 V117 H31 Z"/><path d="M34 141 V144 H31 Z"/><path d="M34 168 V171 H31 Z"/><path d="M34 195 V198 H31 Z"/>
   <path d="M34 249 V252 H31 Z"/><path d="M34 276 V279 H31 Z"/><path d="M34 303 V306 H31 Z"/><path d="M34 330 V333 H31 Z"/><path d="M34 357 V360 H31 Z"/><path d="M34 384 V387 H31 Z"/><path d="M34 411 V414 H31 Z"/><path d="M34 438 V441 H31 Z"/><path d="M34 465 V468 H31 Z"/><path d="M34 492 V495 H31 Z"/><path d="M34 519 V522 H31 Z"/><path d="M34 546 V549 H31 Z"/><path d="M34 573 V576 H31 Z"/><path d="M34 600 V603 H31 Z"/><path d="M34 654 V657 H31 Z"/><path d="M34 767 V770 H31 Z"/>
  </g>
  <!-- move -->
  <g stroke="#e8e8e8" stroke-width="1.3" fill="none"><path d="M20.5 74 V87.5 M13.5 80.7 H27.5"/></g>
  <g fill="#e8e8e8"><path d="M20.5 72.5 L17.5 75.8 H23.5 Z M20.5 89 L17.5 85.7 H23.5 Z M12.5 80.7 L15.8 77.7 V83.7 Z M28.5 80.7 L25.2 77.7 V83.7 Z"/></g>
  <!-- marquee -->
  <rect x="13.5" y="101" width="14" height="13" rx="1.5" stroke="#e8e8e8" stroke-width="1.4" fill="none" stroke-dasharray="3 2.2"/>
  <!-- lasso -->
  <g stroke="#e8e8e8" stroke-width="1.3" fill="none"><ellipse cx="21.5" cy="131" rx="7.5" ry="5"/><path d="M15.5 134 Q13 137 15 139 Q17 141 18 138"/></g>
  <!-- object selection -->
  <rect x="13.5" y="153.5" width="13" height="13" stroke="#d8d8d8" stroke-width="1" stroke-dasharray="1.4 1" fill="none"/>
  <rect x="16" y="156" width="8" height="8" fill="#e8e8e8"/>
  <path d="M20.5 159.5 L20.5 171 L23.3 168.4 L25.2 172.2 L27 171.3 L25.1 167.6 L28.8 167.3 Z" fill="#e8e8e8" stroke="#535353" stroke-width="0.9"/>
  <!-- crop -->
  <g stroke="#e8e8e8" stroke-width="1.6" fill="none"><path d="M16 180 V194 H29.5 M12 184 H26 V198"/></g>
  <!-- frame -->
  <g stroke="#e8e8e8" stroke-width="1.3" fill="none"><rect x="13" y="208" width="15" height="14"/><path d="M13 208 L28 222 M28 208 L13 222"/></g>
  <!-- eyedropper -->
  <g stroke="#e8e8e8" stroke-width="1.3" fill="none"><path d="M21 240 L14 247 Q12.5 249 14 250 Q15 251.5 17 250 L24 243"/></g>
  <path d="M20 238.5 L25 235 Q27 233.5 28.5 235 Q30 236.5 28.5 238.5 L25.2 243 L26.5 244.3 L25 245.8 L18.7 239.5 L20.2 238 Z" fill="#e8e8e8"/>
  <!-- healing/patch -->
  <g fill="#e8e8e8"><rect x="13" y="264" width="15" height="12" rx="2"/></g>
  <rect x="16" y="266.5" width="9" height="7" fill="#6f6f6f"/>
  <g fill="#e8e8e8"><rect x="11" y="266" width="2" height="1"/><rect x="11" y="269.5" width="2" height="1"/><rect x="11" y="273" width="2" height="1"/><rect x="28" y="266" width="2" height="1"/><rect x="28" y="269.5" width="2" height="1"/><rect x="28" y="273" width="2" height="1"/><rect x="15.5" y="262" width="1" height="2"/><rect x="20" y="262" width="1" height="2"/><rect x="24.5" y="262" width="1" height="2"/><rect x="15.5" y="276" width="1" height="2"/><rect x="20" y="276" width="1" height="2"/><rect x="24.5" y="276" width="1" height="2"/></g>
  <!-- brush -->
  <path d="M27.5 289.5 L20 298 L22 300 L28.5 290.5 Z" fill="#e8e8e8"/>
  <path d="M19.3 298.5 Q16 298.5 15.5 301.5 Q15 303.5 13 304.5 Q18 305 20 303 Q21.5 301.5 21.3 300.5 Z" fill="#e8e8e8"/>
  <!-- stamp -->
  <g fill="#e8e8e8"><circle cx="20.5" cy="319.5" r="3.3"/><rect x="19.3" y="321" width="2.4" height="4"/><path d="M13.5 329 Q13.5 325.5 17 325.5 H24 Q27.5 325.5 27.5 329 Z"/><rect x="13" y="330" width="15" height="1.3"/></g>
  <!-- history brush -->
  <g stroke="#e8e8e8" stroke-width="1.2" fill="none"><path d="M19 350 Q14 350 13.5 346.5 Q13 343 17 343 Q20 343 20 346 Q19.5 348.5 17.5 347.5"/><path d="M23.5 342 Q28.5 343.5 28.5 349 Q28 355 22 357.5"/></g>
  <path d="M27 343.5 L20 351.5 L21.7 353 L27.8 344.2 Z" fill="#e8e8e8"/>
  <path d="M19.3 352 Q16 352 15.5 355 Q15 357.5 13 358.5 Q18 359 20 357 Q21.5 355.5 21.3 354 Z" fill="#e8e8e8"/>
  <!-- eraser -->
  <path d="M22.5 373 L28 378.5 L21 385.5 L15.5 385.5 L13 383 Z" fill="#e8e8e8"/>
  <path d="M16 379.5 L20.5 384.5" stroke="#535353" stroke-width="1"/>
  <rect x="21" y="385.2" width="8" height="1.2" fill="#e8e8e8"/>
  <!-- gradient -->
  <defs><linearGradient id="gr" x1="0" y1="0" x2="1" y2="1"><stop offset="0" stop-color="#2a2a2a"/><stop offset="1" stop-color="#d8d8d8"/></linearGradient></defs>
  <rect x="13" y="399" width="15" height="12.5" fill="url(#gr)" stroke="#e8e8e8" stroke-width="1.3"/>
  <!-- blur drop -->
  <path d="M20.5 425 Q14.5 432 14.5 435 Q14.5 440.5 20.5 440.5 Q26.5 440.5 26.5 435 Q26.5 432 20.5 425 Z" fill="#e8e8e8"/>
  <!-- dodge -->
  <circle cx="23" cy="456.8" r="5" fill="#e8e8e8"/>
  <path d="M19.8 460 L13 467" stroke="#e8e8e8" stroke-width="1.5"/>
  <!-- pen / path -->
  <path d="M16 494 V480.5 L26.5 491" stroke="#e8e8e8" stroke-width="1.3" fill="none"/>
  <!-- type T -->
  <g fill="#eeeeee"><rect x="13.7" y="507" width="14.4" height="1.9"/><rect x="19.9" y="507" width="2" height="13"/><rect x="16.8" y="519" width="8.2" height="1.7"/><rect x="13.7" y="507" width="1.5" height="4"/><rect x="26.6" y="507" width="1.5" height="4"/></g>
  <!-- path selection arrow -->
  <path d="M15.5 533 V546 L18.7 543 L21.5 548.5 L23.3 547.6 L20.6 542.2 L25.5 542 Z" fill="none" stroke="#e8e8e8" stroke-width="1.3" stroke-linejoin="miter"/>
  <!-- rectangle -->
  <rect x="12.8" y="561.2" width="15.5" height="12.5" fill="#6a6a6a" stroke="#e8e8e8" stroke-width="1.4"/>
  <!-- hand -->
  <g fill="#e8e8e8"><rect x="15.6" y="588" width="2.1" height="9" rx="1.05"/><rect x="18.2" y="586" width="2.1" height="10" rx="1.05"/><rect x="20.8" y="586.5" width="2.1" height="10" rx="1.05"/><rect x="23.4" y="588.5" width="2.1" height="9" rx="1.05"/>
  <path d="M15.6 593 H25.5 V597.5 Q25.5 602.8 20.5 602.8 Q17.2 602.8 15.6 600.2 L12.3 595.6 Q11.8 594.5 12.8 594 Q13.8 593.6 14.8 594.6 L15.6 595.5 Z"/></g>
  <!-- zoom -->
  <circle cx="18.5" cy="620.5" r="5.6" stroke="#e8e8e8" stroke-width="1.4" fill="none"/>
  <path d="M22.5 624.5 L28.3 630.3" stroke="#e8e8e8" stroke-width="1.8"/>
  <path d="M16 617.8 Q18 616 20.5 617.5" stroke="#e8e8e8" stroke-width="1" fill="none"/>
  <!-- dots -->
  <g fill="#e8e8e8"><circle cx="14" cy="649" r="1.8"/><circle cx="20.5" cy="649" r="1.8"/><circle cx="27" cy="649" r="1.8"/></g>
  <!-- default colors -->
  <rect x="8.5" y="673" width="6.5" height="6.5" fill="#e8e8e8"/>
  <rect x="5.5" y="670" width="6.5" height="6.5" fill="#111" stroke="#e8e8e8" stroke-width="1"/>
  <!-- swap -->
  <g stroke="#e8e8e8" stroke-width="1.1" fill="none"><path d="M25 671.5 H30.5 V678"/></g>
  <g fill="#e8e8e8"><path d="M23.5 671.5 L26 669.3 V673.7 Z M30.5 680 L28.3 677.5 H32.7 Z"/></g>
  <!-- swatches -->
  <rect x="15.5" y="696.5" width="19" height="18.5" fill="#000" stroke="#e8e8e8" stroke-width="1"/>
  <rect x="5" y="686" width="19" height="19" fill="#d92d20" stroke="#f0f0f0" stroke-width="1"/>
  <!-- quick mask -->
  <rect x="11.5" y="728.5" width="17.5" height="13" stroke="#e8e8e8" stroke-width="1.2" fill="#4a4a4a"/>
  <circle cx="20.2" cy="735" r="3.8" stroke="#cfcfcf" stroke-width="1" stroke-dasharray="1.2 1" fill="none"/>
  <!-- screen mode -->
  <rect x="11.5" y="755.5" width="17.5" height="13" stroke="#e8e8e8" stroke-width="1.3" fill="#535353"/>
  <rect x="11.5" y="755.5" width="17.5" height="2.5" fill="#e8e8e8"/>
 </svg>
</div>
<div class="abs" id="canvas" style="left:244px;top:198px;width:830px;height:554px;display:flex;box-shadow:0 0 0 1px #142020,0 0 0 2px #1f2424">
<div style="width:138px;height:554px;background:#d92e20"></div>
<div style="width:101px;height:554px;background:#bb281d"></div>
<div style="width:91px;height:554px;background:#9e2018"></div>
<div style="width:86px;height:554px;background:#83190f"></div>
<div style="width:88px;height:554px;background:#65110c"></div>
<div style="width:94px;height:554px;background:#440707"></div>
<div style="width:108px;height:554px;background:#270302"></div>
<div style="width:124px;height:554px;background:#040101"></div>
</div>
<div class="abs" style="left:1201px;top:37px;width:299px;height:13px;background:#434343">
 <svg class="abs" style="left:26px;top:3px" width="9" height="7" viewBox="0 0 9 7"><path d="M4 1 L1.5 3.5 L4 6 M8 1 L5.5 3.5 L8 6" stroke="#eee" stroke-width="1.4" fill="none"/></svg>
 <svg class="abs" style="left:285px;top:3px" width="9" height="7" viewBox="0 0 9 7"><path d="M1 1 L3.5 3.5 L1 6 M5 1 L7.5 3.5 L5 6" stroke="#eee" stroke-width="1.4" fill="none"/></svg>
</div>
<div class="abs" style="left:1201px;top:50px;width:43px;height:429px;background:#3d3d3d"></div>
<div class="abs grp" style="top:50px;height:42px"></div>
<div class="abs grp" style="top:93px;height:71px"></div>
<div class="abs grp" style="top:165px;height:41px"></div>
<div class="abs grp" style="top:208px;height:71px"></div>
<div class="abs grp" style="top:280px;height:70px"></div>
<div class="abs grp" style="top:352px;height:41px"></div>
<div class="abs grp" style="top:394px;height:42px"></div>
<div class="abs grp" style="top:437px;height:42px"></div>
<svg class="abs" style="left:1201px;top:50px" width="40" height="429" viewBox="1201 50 40 429">
 <defs><pattern id="grip" x="1211" y="0" width="2.5" height="10" patternUnits="userSpaceOnUse"><rect x="0" y="0" width="1" height="10" fill="#484848"/></pattern></defs>
 <rect x="1211" y="53" width="20" height="3" fill="url(#grip)"/><rect x="1211" y="96" width="20" height="3" fill="url(#grip)"/><rect x="1211" y="168" width="20" height="3" fill="url(#grip)"/><rect x="1211" y="211" width="20" height="3" fill="url(#grip)"/><rect x="1211" y="283" width="20" height="3" fill="url(#grip)"/><rect x="1211" y="355" width="20" height="3" fill="url(#grip)"/><rect x="1211" y="397" width="20" height="3" fill="url(#grip)"/><rect x="1211" y="440" width="20" height="3" fill="url(#grip)"/>
 <!-- play -->
 <path d="M1215 66 L1229 73 L1215 80.5 Z" fill="#e4e4e4"/>
 <!-- brush presets -->
 <g fill="#e4e4e4"><rect x="1211" y="108" width="2" height="2"/><rect x="1214" y="108.3" width="5" height="1.3"/><rect x="1211" y="111.5" width="2" height="2"/><rect x="1214" y="111.8" width="5" height="1.3"/><rect x="1211" y="115" width="2" height="2"/><rect x="1214" y="115.3" width="4" height="1.3"/></g>
 <path d="M1232 111 L1224 119.5 L1226 121.3 L1233.3 112.3 Z" fill="#e4e4e4"/>
 <path d="M1223.3 120 Q1219 120 1218 123 Q1217.5 125 1215.5 125.5 Q1221 126.5 1223.5 124 Q1225 122.8 1225.2 121.8 Z" fill="#e4e4e4"/>
 <!-- brush settings -->
 <g fill="#e4e4e4"><path d="M1211 140.5 Q1213 137.5 1217 137.5 Q1221 137.5 1222 140.5 Q1221 143.5 1217 143.5 Q1213 143.5 1211 140.5 Z"/><rect x="1222" y="140" width="10" height="1.5"/><rect x="1213" y="151" width="9" height="1.5"/><path d="M1223 151.8 L1232 146.5 Q1234 151.8 1232 157 Z"/></g>
 <!-- clone source -->
 <g fill="#e4e4e4"><rect x="1211" y="180" width="2" height="2"/><rect x="1214" y="180.3" width="5" height="1.3"/><rect x="1211" y="183.5" width="2" height="2"/><rect x="1214" y="183.8" width="5" height="1.3"/><rect x="1211" y="187" width="2" height="2"/><rect x="1214" y="187.3" width="4" height="1.3"/><circle cx="1225" cy="182.5" r="3.3"/><rect x="1224" y="184" width="2" height="4"/><path d="M1218.5 193 Q1218.5 188.8 1222 188.8 H1228 Q1231.5 188.8 1231.5 193 Z"/><rect x="1218" y="194.5" width="14" height="2.2"/></g>
 <!-- A| -->
 <text x="1213.3" y="240" font-family="Liberation Sans" font-size="20.5" fill="#e4e4e4" textLength="13" lengthAdjust="spacingAndGlyphs">A</text>
 <rect x="1229" y="223.5" width="1.3" height="17.5" fill="#e4e4e4"/>
 <!-- pilcrow -->
 <path d="M1221 252.5 H1230.5 V254 H1229 V268.5 H1227.3 V254 H1225.2 V268.5 H1223.5 V261 Q1217.5 261 1217.5 256.8 Q1217.5 252.5 1221 252.5 Z" fill="#e4e4e4"/>
 <!-- paragraph styles -->
 <path d="M1224 295.5 H1231 V297 H1229.8 V311 H1228.3 V297 H1226.8 V311 H1225.3 V304 Q1220.5 304 1220.5 299.8 Q1220.5 295.5 1224 295.5 Z" fill="#e4e4e4"/>
 <rect x="1215.5" y="307" width="6" height="6" fill="#e4e4e4"/>
 <rect x="1212" y="303.5" width="6" height="6" fill="#535353" stroke="#e4e4e4" stroke-width="1.3"/>
 <!-- char styles -->
 <text x="1218.8" y="340.5" font-family="Liberation Sans" font-size="21" fill="#e4e4e4" textLength="13" lengthAdjust="spacingAndGlyphs">A</text>
 <rect x="1215.5" y="335.5" width="6" height="6" fill="#e4e4e4"/>
 <rect x="1212" y="332" width="6" height="6" fill="#535353" stroke="#e4e4e4" stroke-width="1.3"/>
 <!-- 3D cube -->
 <path d="M1222 365.5 L1230.5 370 V380 L1222 384.5 L1213.5 380 V370 Z" fill="#8a8a8a" stroke="#e4e4e4" stroke-width="1.3" stroke-linejoin="round"/>
 <path d="M1213.5 370 L1222 374.5 L1230.5 370 M1222 374.5 V384.5" stroke="#e4e4e4" stroke-width="1.3" fill="none"/>
 <path d="M1214.2 370.4 L1222 366.3 L1229.8 370.4 L1222 374.3 Z" fill="#c8c8c8"/>
 <!-- table -->
 <rect x="1213.5" y="410.5" width="17" height="13.5" fill="#f0f0f0"/>
 <g fill="#3a3a3a"><rect x="1217" y="412" width="1.3" height="10.5" opacity=".9"/><rect x="1225.5" y="412" width="1.3" height="10.5" opacity=".9"/><rect x="1215" y="416.7" width="14" height="1.2"/></g>
 <g fill="#f0f0f0"><rect x="1217" y="413.6" width="1.3" height="1"/><rect x="1225.5" y="413.6" width="1.3" height="1"/><rect x="1217" y="420" width="1.3" height="1"/><rect x="1225.5" y="420" width="1.3" height="1"/><rect x="1219.5" y="416.7" width="1" height="1.2"/><rect x="1222.5" y="416.7" width="1" height="1.2"/></g>
 <g fill="#3a3a3a"><rect x="1215" y="411.8" width="1" height="1"/><rect x="1219.8" y="411.8" width="1" height="1"/><rect x="1222.6" y="411.8" width="1" height="1"/><rect x="1228" y="411.8" width="1" height="1"/><rect x="1215" y="422" width="1" height="1"/><rect x="1219.8" y="422" width="1" height="1"/><rect x="1222.6" y="422" width="1" height="1"/><rect x="1228" y="422" width="1" height="1"/></g>
 <!-- glyphs -->
 <g fill="none" stroke="#ececec" stroke-linecap="round">
  <path d="M1215.8 466.3 Q1222 461 1227.2 453.3" stroke-width="1.8"/>
  <path d="M1227.2 453.3 Q1226.8 461 1227.6 465.5 Q1228.3 467.3 1230.3 466.3" stroke-width="1.5"/>
  <path d="M1219.8 461.6 H1227" stroke-width="1.2"/>
  <path d="M1214.6 457.2 Q1215.3 453 1220.5 453.3 Q1224 453.6 1227.2 453.3" stroke-width="1.3"/>
  <path d="M1213.6 466.8 Q1215.3 468.3 1217.5 466.6" stroke-width="1.3"/>
 </g>
 </svg>
<div class="abs" id="props" style="left:1244px;top:50px;width:256px;height:426px;background:#535353">
 <div class="abs" style="left:0;top:0;width:256px;height:29px;background:#474747"></div>
 <div class="abs" style="left:142px;top:0;width:73px;height:29px;background:#535353"></div>
 <div class="abs tsep" style="left:35px"></div><div class="abs tsep" style="left:71px"></div><div class="abs tsep" style="left:107px"></div>
 <div class="abs tab" style="left:9px">Libra</div>
 <div class="abs tab" style="left:45px;width:26px">Histo</div>
 <div class="abs tab" style="left:80px;width:27px">Navig</div>
 <div class="abs tab" style="left:116px;width:26px">Adju</div>
 <div class="abs tab" style="left:151px;color:#f4f4f4">Properties</div>
 <svg class="abs" style="left:239px;top:10px" width="11" height="9" viewBox="0 0 11 9"><g fill="#bdbdbd"><rect x="0" y="0" width="11" height="1.2"/><rect x="0" y="2" width="11" height="1.2"/><rect x="0" y="4" width="11" height="1.2"/><rect x="0" y="6" width="11" height="1.2"/><rect x="0" y="7.8" width="11" height="1.2"/></g></svg>
 <!-- pixel layer -->
 <div class="abs" style="left:11px;top:36px;width:23px;height:22px;background:#3b3b3b;border-radius:2px"></div>
 <svg class="abs" style="left:15px;top:40px" width="15" height="14" viewBox="0 0 15 14"><rect x="0.75" y="0.75" width="13.5" height="12.5" fill="none" stroke="#eee" stroke-width="1.5"/><path d="M2 12 V9 L4 6.5 L5.5 7.8 L7 4.5 L8.5 7 L10 6 L13 9 V12 Z" fill="#eee"/><circle cx="11.2" cy="3.6" r="1.1" fill="#eee"/></svg>
 <div class="abs lbl" style="left:39px;top:42px">Pixel Layer</div>
 <div class="abs" style="left:0;top:63px;width:256px;height:2px;background:#434343"></div>
 <!-- scrollbar -->
 <div class="abs" style="left:240px;top:65px;width:16px;height:334px;background:#4c4c4c"></div>
 <div class="abs" style="left:243px;top:68px;width:10px;height:298px;background:#6a6a6a;border-radius:5px"></div>
 <!-- Transform -->
 <svg class="abs chev" style="top:79px" width="10" height="6" viewBox="0 0 10 6"><path d="M0.7 0.7 L5 5 L9.3 0.7" stroke="#d6d6d6" stroke-width="1.2" fill="none"/></svg>
 <div class="abs hd" style="top:75px">Transform</div>
 <div class="abs" style="left:9px;top:103px;width:26px;height:27px;background:#3b3b3b;border:1px solid #5c5c5c;border-radius:2px"></div>
 <svg class="abs" style="left:16px;top:108px" width="12" height="17" viewBox="0 0 12 17"><g fill="none" stroke="#eee" stroke-width="1.4" stroke-linecap="round"><path d="M3.7 7.4 A3.3 3.3 0 1 1 8.3 7.4"/><path d="M3.7 9.6 A3.3 3.3 0 1 0 8.3 9.6"/><path d="M6 5.5 V11.5"/></g></svg>
 <div class="abs lbl2" style="left:44px;top:98px">W</div>
 <div class="abs inp" style="left:59px;top:96px;width:63px;height:17px">1500 px</div>
 <div class="abs lbl2" style="left:131px;top:98px">X</div>
 <div class="abs inp" style="left:142px;top:96px;width:64px;height:17px">0 px</div>
 <div class="abs lbl2" style="left:45px;top:123px">H</div>
 <div class="abs inp" style="left:59px;top:121px;width:63px;height:17px">1000 px</div>
 <div class="abs lbl2" style="left:131px;top:123px">Y</div>
 <div class="abs inp" style="left:142px;top:121px;width:64px;height:17px">0 px</div>
 <svg class="abs" style="left:38px;top:154px" width="15" height="11" viewBox="0 0 15 11"><path d="M0.5 10.3 H14 M0.8 10 L10 1.2" stroke="#e0e0e0" stroke-width="1.2" fill="none"/><path d="M7.5 4 Q10 6.5 9.6 10" stroke="#e0e0e0" stroke-width="1" fill="none"/></svg>
 <div class="abs inp" style="left:59px;top:150px;width:62px;height:18px">0,00°</div>
 <div class="abs" style="left:104px;top:151px;width:1px;height:16px;background:#535353"></div>
 <svg class="abs" style="left:109px;top:157px" width="9" height="6" viewBox="0 0 9 6"><path d="M1 1 L4.5 4.5 L8 1" stroke="#e6e6e6" stroke-width="1.2" fill="none"/></svg>
 <svg class="abs" style="left:148px;top:152px" width="18" height="15" viewBox="0 0 18 15"><path d="M1 1.5 L6.5 7.5 L1 13.5 Z" fill="none" stroke="#dcdcdc" stroke-width="1.1"/><path d="M17 1.5 L11.5 7.5 L17 13.5 Z" fill="#dcdcdc"/><path d="M9 0 V15" stroke="#bdbdbd" stroke-width="1" stroke-dasharray="1.5 1"/></svg>
 <svg class="abs" style="left:185px;top:151px" width="15" height="17" viewBox="0 0 15 17"><path d="M1.5 1 L7.5 6 L13.5 1 Z" fill="none" stroke="#dcdcdc" stroke-width="1.1"/><path d="M1.5 16 L7.5 11 L13.5 16 Z" fill="#dcdcdc"/><path d="M0 8.5 H15" stroke="#bdbdbd" stroke-width="1" stroke-dasharray="1.5 1"/></svg>
 <div class="abs" style="left:0;top:183px;width:240px;height:2px;background:#434343"></div>
 <!-- Align -->
 <svg class="abs chev" style="top:199px" width="10" height="6" viewBox="0 0 10 6"><path d="M0.7 0.7 L5 5 L9.3 0.7" stroke="#d6d6d6" stroke-width="1.2" fill="none"/></svg>
 <div class="abs hd" style="top:195px">Align and Distribute</div>
 <div class="abs lbl" style="left:8px;top:217px">Align:</div>
 <svg class="abs" style="left:0;top:240px" width="240" height="24" viewBox="1244 290 240 24"><g fill="#9a9a9a">
  <rect x="1258" y="294" width="1" height="16"/><rect x="1260" y="297" width="6" height="3.5"/><rect x="1260" y="302.5" width="11" height="3.5"/>
  <rect x="1295" y="294" width="1" height="16"/><rect x="1292.5" y="297" width="6" height="3.5"/><rect x="1290" y="302.5" width="11" height="3.5"/>
  <rect x="1332" y="294" width="1" height="16"/><rect x="1325" y="297" width="6" height="3.5"/><rect x="1320" y="302.5" width="11" height="3.5"/>
  <rect x="1366" y="295" width="15" height="1"/><rect x="1368.5" y="297" width="3.5" height="12"/><rect x="1374" y="297" width="3.5" height="6"/>
  <rect x="1397" y="302" width="15" height="1"/><rect x="1399" y="296" width="3.5" height="12"/><rect x="1405" y="299" width="3.5" height="6"/>
  <rect x="1427" y="308" width="15" height="1"/><rect x="1429" y="295" width="3.5" height="12"/><rect x="1435" y="301" width="3.5" height="6"/>
 </g></svg>
 <g></g>
 <svg class="abs" style="left:187px;top:281px" width="16" height="5" viewBox="0 0 16 5"><g fill="#eee"><circle cx="2.5" cy="2.5" r="1.5"/><circle cx="7.7" cy="2.5" r="1.5"/><circle cx="12.9" cy="2.5" r="1.5"/></g></svg>
 <div class="abs" style="left:0;top:298px;width:240px;height:2px;background:#434343"></div>
 <!-- Quick Actions -->
 <svg class="abs chev" style="top:313px" width="10" height="6" viewBox="0 0 10 6"><path d="M0.7 0.7 L5 5 L9.3 0.7" stroke="#d6d6d6" stroke-width="1.2" fill="none"/></svg>
 <div class="abs hd" style="top:309px">Quick Actions</div>
 <div class="abs btn" style="left:9px;top:332px;width:197px;height:25px">Remove Background</div>
 <div class="abs btn" style="left:9px;top:363px;width:197px;height:25px">Select Subject</div>
</div>
<div class="abs" style="left:1244px;top:476px;width:256px;height:3px;background:#3d3d3d"></div>
<div class="abs" id="layers" style="left:1244px;top:479px;width:256px;height:435px;background:#535353">
 <div class="abs" style="left:0;top:0;width:256px;height:29px;background:#474747"></div>
 <div class="abs" style="left:0;top:0;width:100px;height:29px;background:#535353"></div>
 <div class="abs tsep" style="left:169px"></div><div class="abs tsep" style="left:215px"></div>
 <div class="abs tab" style="left:117px;top:8px">Channels</div>
 <div class="abs tab" style="left:179px;top:8px">Paths</div>
 <svg class="abs" style="left:239px;top:10px" width="11" height="9" viewBox="0 0 11 9"><g fill="#bdbdbd"><rect x="0" y="0" width="11" height="1.2"/><rect x="0" y="2" width="11" height="1.2"/><rect x="0" y="4" width="11" height="1.2"/><rect x="0" y="6" width="11" height="1.2"/><rect x="0" y="7.8" width="11" height="1.2"/></g></svg>
 <!-- filter row icons -->
 <svg class="abs" style="left:0;top:29px" width="256" height="33" viewBox="1244 508 256 33">
  <circle cx="1382" cy="527" r="5.3" fill="none" stroke="#e6e6e6" stroke-width="1.4"/>
  <path d="M1385.8 523.2 A5.3 5.3 0 0 1 1378.2 530.8 Z" fill="#e6e6e6"/>
  <g fill="#e6e6e6"><rect x="1401.5" y="521.5" width="11" height="1.8"/><rect x="1406.1" y="521.5" width="1.8" height="10.5"/><rect x="1403.8" y="530.8" width="6.4" height="1.4"/><rect x="1401.5" y="521.5" width="1.3" height="3"/><rect x="1411.2" y="521.5" width="1.3" height="3"/></g>
  <rect x="1427.5" y="522" width="10" height="9.5" fill="none" stroke="#e6e6e6" stroke-width="1.2"/>
  <g fill="#535353" stroke="#e6e6e6" stroke-width="1"><rect x="1426" y="520.5" width="3" height="3"/><rect x="1436" y="520.5" width="3" height="3"/><rect x="1426" y="530" width="3" height="3"/><rect x="1436" y="530" width="3" height="3"/></g>
  <path d="M1455 521.6 H1459.5 L1463.3 525.3 V532.4 H1455 Z" fill="none" stroke="#e6e6e6" stroke-width="1.2"/><path d="M1459.3 521.6 V525.5 H1463.3" fill="none" stroke="#e6e6e6" stroke-width="1"/>
  <rect x="1452" y="527" width="6.5" height="6.3" fill="#e6e6e6"/>
  <rect x="1476" y="518" width="10" height="19" rx="5" fill="#4a4a4a" stroke="#5f5f5f" stroke-width="0.8"/>
  <circle cx="1481" cy="522.8" r="4.3" fill="#e0e0e0"/>
 </svg>
 <div class="abs" style="left:0;top:62px;width:256px;height:1px;background:#454545"></div>
 <div class="abs inp2" style="left:8px;top:69px;width:131px;height:17px"><svg class="abs" style="left:120px;top:5px" width="9" height="6" viewBox="0 0 9 6"><path d="M1 1 L4.5 4.5 L8 1" stroke="#e6e6e6" stroke-width="1.2" fill="none"/></svg></div>
 <div class="abs lbl2" style="left:143px;top:71px;color:#dcdcdc">Opacity:</div>
 <div class="abs inp2" style="left:188px;top:69px;width:52px;height:17px"><span>100%</span><div class="abs" style="left:36px;top:0;width:1px;height:15px;background:#535353"></div><svg class="abs" style="left:40px;top:5px" width="9" height="6" viewBox="0 0 9 6"><path d="M1 1 L4.5 4.5 L8 1" stroke="#e6e6e6" stroke-width="1.2" fill="none"/></svg></div>
 <div class="abs" style="left:0;top:91px;width:256px;height:1px;background:#454545"></div>
 <svg class="abs" style="left:130px;top:98px" width="13" height="14" viewBox="0 0 13 14"><path d="M3 6.5 V4.5 Q3 1 6.5 1 Q10 1 10 4.5 V6.5" fill="none" stroke="#e6e6e6" stroke-width="1.5"/><rect x="1.5" y="6" width="10" height="7.5" rx="1" fill="#e6e6e6"/><circle cx="6.5" cy="9.8" r="1.1" fill="#535353"/></svg>
 <div class="abs lbl2" style="left:167px;top:100px;color:#dcdcdc">Fill:</div>
 <div class="abs inp2" style="left:188px;top:98px;width:52px;height:17px"><span>100%</span><div class="abs" style="left:36px;top:0;width:1px;height:15px;background:#535353"></div><svg class="abs" style="left:40px;top:5px" width="9" height="6" viewBox="0 0 9 6"><path d="M1 1 L4.5 4.5 L8 1" stroke="#e6e6e6" stroke-width="1.2" fill="none"/></svg></div>
 <!-- list -->
 <div class="abs" style="left:0;top:123px;width:256px;height:276px;background:#4c4c4c"></div>
 <div class="abs" style="left:0;top:123px;width:240px;height:32px;background:#6a6a6a"></div>
 <div class="abs" style="left:0;top:155px;width:240px;height:33px;background:#535353;border-bottom:1px solid #4a4a4a"></div>
 <div class="abs lbl" style="left:128px;top:166px;width:7px;overflow:hidden;direction:rtl">Background</div>
 <svg class="abs" style="left:211px;top:165px" width="12" height="13" viewBox="0 0 12 13"><path d="M3 6 V4.2 Q3 1 6 1 Q9 1 9 4.2 V6" fill="none" stroke="#e0e0e0" stroke-width="1.3"/><rect x="1" y="6" width="10" height="6.5" rx="1" fill="none" stroke="#e0e0e0" stroke-width="1.3"/><rect x="5.2" y="8.3" width="1.6" height="1.6" fill="#e0e0e0"/></svg>
 <div class="abs" style="left:0;top:398px;width:256px;height:3px;background:#474747"></div>
 <!-- bottom toolbar -->
 <div class="abs" style="left:0;top:401px;width:256px;height:25px;background:#535353"></div>
 <svg class="abs" style="left:0;top:400px" width="256" height="26" viewBox="1244 879 256 26">
  <circle cx="1380.3" cy="891.2" r="5.2" fill="none" stroke="#e6e6e6" stroke-width="1.3"/>
  <path d="M1384 887.5 A5.2 5.2 0 0 1 1376.6 894.9 Z" fill="#e6e6e6"/>
  <path d="M1385.5 898.5 H1389.5 L1387.5 900.5 Z" fill="#e6e6e6"/>
  <path d="M1401 887.5 H1406 L1407 889 H1414.5 V897 H1401 Z" fill="#e6e6e6"/>
  <rect x="1401" y="886" width="5" height="1" fill="#e6e6e6"/>
  <rect x="1430.5" y="885.5" width="11.5" height="12" fill="none" stroke="#e6e6e6" stroke-width="1.3"/>
  <path d="M1436.2 888.5 V895 M1433 891.7 H1439.5" stroke="#e6e6e6" stroke-width="1.5"/>
  <path d="M1459.5 888 H1470 L1469 897.5 H1460.5 Z" fill="none" stroke="#e6e6e6" stroke-width="1.2"/>
  <rect x="1459" y="886.5" width="11.5" height="1.5" fill="#e6e6e6"/>
  <rect x="1462.5" y="884.5" width="4.5" height="2" fill="none" stroke="#e6e6e6" stroke-width="1"/>
  <g fill="#bdbdbd"><rect x="1462" y="889.5" width="1" height="7"/><rect x="1464.3" y="889.5" width="1" height="7"/><rect x="1466.6" y="889.5" width="1" height="7"/></g>
 </svg>
 <div class="abs" style="left:0;top:426px;width:256px;height:1px;background:#3a3a3a"></div>
 <div class="abs" style="left:0;top:427px;width:256px;height:8px;background:#474747"></div>
</div>
<div class="abs" id="menu" style="left:1239px;top:463px;width:136px;height:444px;border-radius:7px;background:linear-gradient(180deg,#d0d0d0 0%,#cdcbcb 50%,#cacaca 100%);box-shadow:inset 0 0 0 1px rgba(255,255,255,.45),0 0 0 1px rgba(0,0,0,.55),0 3px 10px rgba(0,0,0,.3);overflow:hidden">
<div class="abs" style="left:5px;top:76px;width:126px;height:20px;border-radius:5px;background:#3a74de"></div>
<div class="abs" style="left:14px;top:49.8px;width:108px;height:1px;background:#b4b4b4"></div>
<div class="abs" style="left:14px;top:160.2px;width:108px;height:1px;background:#b4b4b4"></div>
<div class="abs" style="left:14px;top:270.6px;width:108px;height:1px;background:#b4b4b4"></div>
<div class="abs" style="left:14px;top:420.7px;width:108px;height:1px;background:#b4b4b4"></div>
<div class="abs mi" style="top:8.6px;color:#1e1e1e;">Normal</div>
<div class="abs mi" style="top:28.4px;color:#1e1e1e;">Dissolve</div>
<div class="abs mi" style="top:59.4px;color:#1e1e1e;">Darken</div>
<div class="abs mi" style="top:79.3px;color:#fff;-webkit-text-stroke:0.45px #fff;letter-spacing:0.15px">Multiply</div>
<div class="abs mi" style="top:99.1px;color:#1e1e1e;">Color Burn</div>
<div class="abs mi" style="top:118.9px;color:#1e1e1e;">Linear Burn</div>
<div class="abs mi" style="top:138.7px;color:#1e1e1e;">Darker Color</div>
<div class="abs mi" style="top:169.9px;color:#1e1e1e;">Lighten</div>
<div class="abs mi" style="top:189.7px;color:#1e1e1e;">Screen</div>
<div class="abs mi" style="top:209.4px;color:#1e1e1e;">Color Dodge</div>
<div class="abs mi" style="top:229.2px;color:#1e1e1e;">Linear Dodge (Add)</div>
<div class="abs mi" style="top:249.0px;color:#1e1e1e;">Lighter Color</div>
<div class="abs mi" style="top:280.4px;color:#1e1e1e;">Overlay</div>
<div class="abs mi" style="top:300.2px;color:#1e1e1e;">Soft Light</div>
<div class="abs mi" style="top:320.0px;color:#1e1e1e;">Hard Light</div>
<div class="abs mi" style="top:339.8px;color:#1e1e1e;">Vivid Light</div>
<div class="abs mi" style="top:359.6px;color:#1e1e1e;">Linear Light</div>
<div class="abs mi" style="top:379.4px;color:#1e1e1e;">Pin Light</div>
<div class="abs mi" style="top:399.2px;color:#1e1e1e;">Hard Mix</div>
<svg class="abs" style="left:8px;top:11px" width="8" height="8" viewBox="0 0 8 8"><path d="M0.8 4.3 L3 7 L7.3 0.8" stroke="#1e1e1e" stroke-width="1.4" fill="none"/></svg>
<svg class="abs" style="left:62px;top:429px" width="11" height="8" viewBox="0 0 11 8"><path d="M1 1.3 L5.5 6 L10 1.3" stroke="#1e1e1e" stroke-width="1.6" fill="none"/></svg>
</div>
</body></html>
